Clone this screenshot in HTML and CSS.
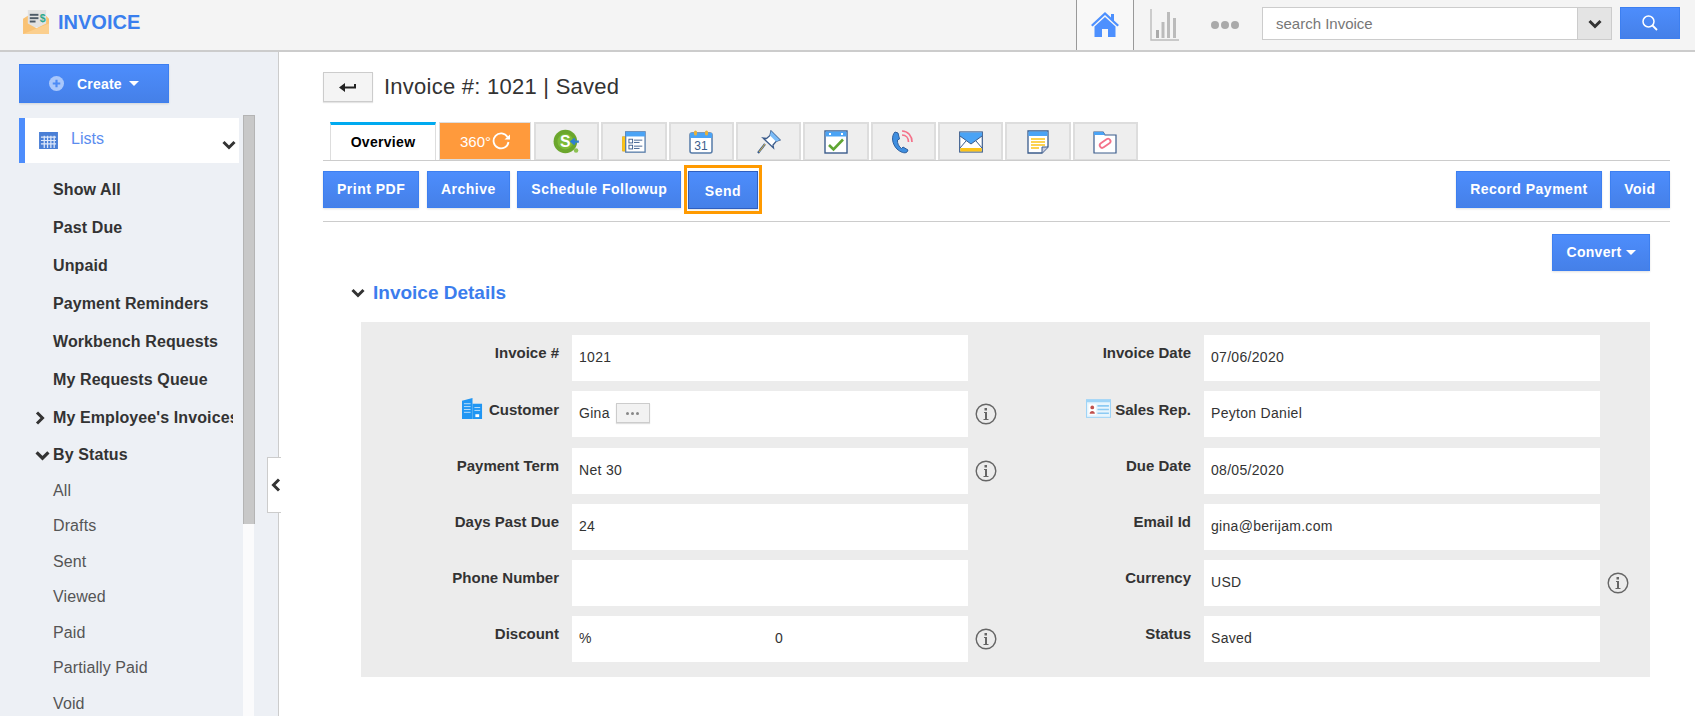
FILE: index.html
```html
<!DOCTYPE html>
<html lang="en">
<head>
<meta charset="utf-8">
<title>Invoice</title>
<link rel="stylesheet" href="styles.css">
</head>
<body>
<header class="topbar">
  <div class="brand">
    <svg class="brand-icon" viewBox="0 0 28 26"><rect x="5" y="0" width="19" height="18" fill="#e2e2e2"/><rect x="7" y="4" width="9" height="2" fill="#4d5a66"/><rect x="7" y="7.5" width="9" height="2" fill="#4d5a66"/><rect x="7" y="11" width="6" height="2" fill="#4d5a66"/><text x="17.5" y="12" class="brand-dollar">$</text><path d="M0 9 L5 6 V14 L14 19 L24 14 V6 L27 9 V25 H0Z" fill="#f9c274"/><path d="M0 25 L27 14 V25Z" fill="#fbcf8e"/></svg>
    <span class="brand-name">INVOICE</span>
  </div>
  <div class="home-tab">
    <svg class="home-icon" viewBox="0 0 28 26"><path d="M14 1 L0 14 L1.6 15.6 L14 4 L26.4 15.6 L28 14 L23 9.4 V3 H20 V6.6Z" fill="#4d90fe"/><path d="M14 6 L3.5 15.6 V26 H11 V18 H17 V26 H24.5 V15.6Z" fill="#4d90fe"/></svg>
  </div>
  <svg class="chart-icon" viewBox="0 0 29 32"><path d="M1 0 V31 H29" fill="none" stroke="#bbb" stroke-width="1.4"/><rect x="6" y="21" width="3" height="8" fill="#aaa"/><rect x="11.500" y="13" width="3" height="16" fill="#bbb"/><rect x="17" y="3" width="3" height="26" fill="#bbb"/><rect x="23" y="9" width="3" height="20" fill="#bbb"/></svg>
  <div class="dots"><i></i><i></i><i></i></div>
  <div class="search">
    <div class="search-text">search Invoice</div>
    <div class="search-drop"><svg class="chev-sm" viewBox="0 0 14 10"><path d="M1.500 2 L7 7.500 L12.500 2" fill="none" stroke="#333" stroke-width="3"/></svg></div>
  </div>
  <div class="search-btn"><svg viewBox="0 0 18 18" class="search-icon"><circle cx="7.500" cy="7.500" r="5.500" fill="none" stroke="#fff" stroke-width="1.500"/><path d="M11.500 11.500 L16 16" stroke="#fff" stroke-width="1.800"/></svg></div>
</header>

<div class="shell">
  <aside class="sidebar">
    <div class="side-col">
      <div class="btn create-btn">
        <svg class="plus" viewBox="0 0 14 14"><circle cx="7" cy="7" r="7" fill="#a9c7fb"/><path d="M7 3.500 V10.500 M3.500 7 H10.500" stroke="#4d8bf5" stroke-width="2"/></svg>
        <span>Create</span><i class="caret"></i>
      </div>
      <div class="lists-row">
        <svg class="cal-icon" viewBox="0 0 20 18"><rect width="20" height="18" fill="#4a7fd6"/><path d="M2 5.500 H18 M2 9 H18 M2 12.500 H18 M5.500 4 V17 M9 4 V17 M12.500 4 V17 M16 4 V17" stroke="#dfe9fa" stroke-width="1.300"/></svg>
        <span class="lists-label">Lists</span>
        <svg class="chev-lists" viewBox="0 0 14 10"><path d="M1.500 2 L7 7.500 L12.500 2" fill="none" stroke="#333" stroke-width="3"/></svg>
      </div>
      <ul class="menu">
        <li class="item strong"><span class="gutter"></span>Show All</li>
        <li class="item strong"><span class="gutter"></span>Past Due</li>
        <li class="item strong"><span class="gutter"></span>Unpaid</li>
        <li class="item strong"><span class="gutter"></span>Payment Reminders</li>
        <li class="item strong"><span class="gutter"></span>Workbench Requests</li>
        <li class="item strong"><span class="gutter"></span>My Requests Queue</li>
        <li class="item strong"><span class="gutter"><svg class="chev-right" viewBox="0 0 10 14"><path d="M2 1.500 L7.500 7 L2 12.500" fill="none" stroke="#333" stroke-width="3"/></svg></span>My Employee's Invoices</li>
        <li class="item strong status"><span class="gutter"><svg class="chev-down" viewBox="0 0 14 10"><path d="M1.500 2 L7 7.500 L12.500 2" fill="none" stroke="#333" stroke-width="3"/></svg></span>By Status</li>
        <li class="item"><span class="gutter"></span>All</li>
        <li class="item"><span class="gutter"></span>Drafts</li>
        <li class="item"><span class="gutter"></span>Sent</li>
        <li class="item"><span class="gutter"></span>Viewed</li>
        <li class="item"><span class="gutter"></span>Paid</li>
        <li class="item"><span class="gutter"></span>Partially Paid</li>
        <li class="item"><span class="gutter"></span>Void</li>
      </ul>
    </div>
    <div class="track"><div class="thumb"></div></div>
    <div class="collapse"><svg viewBox="0 0 10 14" class="chev-left"><path d="M8 1.500 L2.500 7 L8 12.500" fill="none" stroke="#333" stroke-width="3"/></svg></div>
  </aside>

  <main class="content">
    <div class="title-row">
      <div class="back"><svg viewBox="0 0 18 12" class="back-icon"><path d="M0 6.500 L6 2 V5.500 H15 V3 H17 V7.500 H6 V11Z" fill="#222"/></svg></div>
      <h1 class="title">Invoice #: 1021 | Saved</h1>
    </div>

    <nav class="tabs">
      <div class="tab tab-active">Overview</div>
      <div class="tab tab-360"><span>360°</span><svg viewBox="0 0 18 18" class="icon-g"><path d="M15.500 5 A7.500 7.500 0 1 0 16.500 10" fill="none" stroke="#fff" stroke-width="1.800"/><path d="M12.500 7.500 H18 V2.500Z" fill="#fff"/></svg></div>
      <div class="tab tab-icon"><svg class="ti ti-money" viewBox="0 0 24 24"><circle cx="11" cy="12" r="10.500" fill="#6ba62c"/><circle cx="11" cy="12" r="7" fill="#7dbb38"/><text x="11" y="17" class="money">S</text><path d="M23 12 H17 M19.500 9.500 L16.500 12 L19.500 14.500" fill="none" stroke="#2f80d0" stroke-width="2"/><circle cx="20.500" cy="20" r="2" fill="#8cc152"/></svg></div>
      <div class="tab tab-icon"><svg class="ti" viewBox="0 0 26 24"><rect x="0" y="6" width="6" height="16" rx="1" fill="#fcc419" stroke="#c9a64a" stroke-width=".6"/><rect x="4" y="1" width="21" height="22" fill="#fff" stroke="#567ba8" stroke-width="1.400"/><rect x="4" y="1" width="21" height="5" fill="#4aa3f5"/><rect x="7.500" y="9" width="4" height="4" fill="none" stroke="#3b5c8c"/><rect x="7.500" y="15.500" width="4" height="4" fill="none" stroke="#3b5c8c"/><path d="M13 10 H22 M13 12.500 H19 M13 16.500 H22 M13 19 H19" stroke="#3b5c8c"/></svg></div>
      <div class="tab tab-icon"><svg class="ti" viewBox="0 0 24 24"><rect x="1" y="3" width="22" height="20" rx="2" fill="#fff" stroke="#567ba8" stroke-width="1.500"/><path d="M1 3 H23 V8 H1Z" fill="#4aa3f5"/><rect x="5" y="0.500" width="3" height="5" rx="1.500" fill="#e6b13b"/><rect x="16" y="0.500" width="3" height="5" rx="1.500" fill="#e6b13b"/><text x="12" y="20" class="cal-num">31</text></svg></div>
      <div class="tab tab-icon"><svg class="ti" viewBox="0 0 24 24"><path d="M1 23 L8 14" stroke="#3b5c8c" stroke-width="2.200"/><path d="M2 22 L8 14" stroke="#d9b64a" stroke-width="1"/><path d="M14 1 L23 10 L19 11.500 L16 15 L16.500 18 L6 8 L9.500 8.500 L13 5.500Z" fill="#fff" stroke="#3b5c8c" stroke-width="1.300"/><path d="M14 1 L23 10 L19 11.500 L13 5.500Z" fill="#7cbcf7"/></svg></div>
      <div class="tab tab-icon"><svg class="ti" viewBox="0 0 24 24"><rect x="1" y="1" width="22" height="22" fill="#fff" stroke="#3b5c8c" stroke-width="1.400"/><rect x="1.500" y="1.500" width="21" height="5" fill="#4aa3f5"/><rect x="5" y="3" width="2" height="2" fill="#fff"/><rect x="17" y="3" width="2" height="2" fill="#fff"/><path d="M5 15 L9.500 19.500 L19 9.500" fill="none" stroke="#5fa533" stroke-width="2.600"/></svg></div>
      <div class="tab tab-icon"><svg class="ti" viewBox="0 0 24 24"><path d="M4 2 C0 6 1 14 6 19 C9 22 14 24 16 22 L17 20 L12 17 L10.500 18.500 C8 17 6 13 6.500 10 L8.500 9 L7 3 Z" fill="#3f8fe0" stroke="#2d5f9e" stroke-width="1"/><path d="M11 1 C17 1 21 6 21 12 M11 5 C15 5 17.500 8 17.500 12" fill="none" stroke="#f4728a" stroke-width="1.700"/></svg></div>
      <div class="tab tab-icon"><svg class="ti" viewBox="0 0 24 24"><rect x="0.700" y="2" width="22.600" height="20" fill="#fff" stroke="#3b5c8c" stroke-width="1.200"/><path d="M1 2.500 H23 V6 L12 14 L1 6Z" fill="#4aa3f5"/><path d="M1 6 L12 14 L23 6 M1 18 L7 11 M23 18 L17 11" fill="none" stroke="#3b5c8c"/><rect x="1.300" y="18" width="21.400" height="3.500" fill="#fcc419"/></svg></div>
      <div class="tab tab-icon"><svg class="ti" viewBox="0 0 24 24"><path d="M2 1 H22 V17 L16 23 H2Z" fill="#fff" stroke="#3b5c8c" stroke-width="1.300"/><rect x="2.500" y="1.500" width="19" height="4.500" fill="#4aa3f5"/><path d="M5 9 H19 M5 12 H19 M5 15 H19 M5 18 H13" stroke="#fcc419" stroke-width="1.400"/><path d="M16 23 V17 H22" fill="#ccd" stroke="#3b5c8c"/></svg></div>
      <div class="tab tab-icon"><svg class="ti" viewBox="0 0 24 24"><path d="M1 2 H10 L12 5 H23 V23 H1Z" fill="#fff" stroke="#3b5c8c" stroke-width="1.200"/><path d="M1 2 H10 L12 5 H1Z" fill="#4aa3f5"/><rect x="6.500" y="11" width="12" height="5" rx="2.500" transform="rotate(-35 12 14)" fill="none" stroke="#f4728a" stroke-width="1.800"/></svg></div>
    </nav>

    <div class="actions">
      <div class="btn act">Print PDF</div>
      <div class="btn act">Archive</div>
      <div class="btn act">Schedule Followup</div>
      <div class="btn act send">Send</div>
      <div class="btn act wide push">Record Payment</div>
      <div class="btn act wide">Void</div>
    </div>

    <div class="convert-row">
      <div class="btn act convert">Convert<i class="caret caret-sm"></i></div>
    </div>

    <h2 class="section"><svg class="chev-section" viewBox="0 0 14 10"><path d="M1.500 2 L7 7.500 L12.500 2" fill="none" stroke="#333" stroke-width="3"/></svg>Invoice Details</h2>

    <section class="panel">
      <div class="pair"><div class="lbl">Invoice #</div><div class="val">1021</div></div>
      <div class="pair"><div class="lbl lbl-r">Invoice Date</div><div class="val">07/06/2020</div></div>

      <div class="pair"><div class="lbl lbl-low"><svg class="lbl-icon" viewBox="0 0 24 22"><path d="M1 22 V3 L12 0 V22Z" fill="#2196f3"/><path d="M12 6 H22 V22 H12Z" fill="#2196f3"/><path d="M3 6 H10 M3 9 H10 M3 12 H10 M3 15 H10 M14 10 H20 M14 13 H20" stroke="#bfe1fb"/><rect x="15" y="17" width="4" height="3" fill="#fff"/></svg>Customer</div><div class="val">Gina<span class="more"><i></i><i></i><i></i></span></div><svg class="info" viewBox="0 0 22 22"><circle cx="11" cy="11" r="9.800" fill="none" stroke="#666" stroke-width="1.400"/><path d="M9.500 5 H12 V7.500 H9.500Z M9 9 H12 V16 H13.500 V17 H8.500 V16 H10 V10 H9Z" fill="#666"/></svg></div>
      <div class="pair"><div class="lbl lbl-r lbl-low"><svg class="lbl-icon" viewBox="0 0 24 18"><rect width="24" height="18" fill="#9fd4f7"/><rect x="1" y="3" width="22" height="14" fill="#e8f5fd"/><rect x="2.500" y="5" width="7" height="10" fill="#fff"/><circle cx="6" cy="8" r="1.800" fill="#c0504d"/><path d="M3.500 14 C3.500 10.500 8.500 10.500 8.500 14Z" fill="#c0504d"/><path d="M11 6.500 H22 M11 10 H22 M11 13.500 H22" stroke="#8ccaf3" stroke-width="1.500"/></svg>Sales Rep.</div><div class="val">Peyton Daniel</div></div>

      <div class="pair"><div class="lbl">Payment Term</div><div class="val">Net 30</div><svg class="info" viewBox="0 0 22 22"><circle cx="11" cy="11" r="9.800" fill="none" stroke="#666" stroke-width="1.400"/><path d="M9.500 5 H12 V7.500 H9.500Z M9 9 H12 V16 H13.500 V17 H8.500 V16 H10 V10 H9Z" fill="#666"/></svg></div>
      <div class="pair"><div class="lbl lbl-r">Due Date</div><div class="val">08/05/2020</div></div>

      <div class="pair"><div class="lbl">Days Past Due</div><div class="val">24</div></div>
      <div class="pair"><div class="lbl lbl-r">Email Id</div><div class="val">gina@berijam.com</div></div>

      <div class="pair"><div class="lbl">Phone Number</div><div class="val"></div></div>
      <div class="pair"><div class="lbl lbl-r">Currency</div><div class="val">USD</div><svg class="info" viewBox="0 0 22 22"><circle cx="11" cy="11" r="9.800" fill="none" stroke="#666" stroke-width="1.400"/><path d="M9.500 5 H12 V7.500 H9.500Z M9 9 H12 V16 H13.500 V17 H8.500 V16 H10 V10 H9Z" fill="#666"/></svg></div>

      <div class="pair"><div class="lbl">Discount</div><div class="val"><span class="pct">%</span>0</div><svg class="info" viewBox="0 0 22 22"><circle cx="11" cy="11" r="9.800" fill="none" stroke="#666" stroke-width="1.400"/><path d="M9.500 5 H12 V7.500 H9.500Z M9 9 H12 V16 H13.500 V17 H8.500 V16 H10 V10 H9Z" fill="#666"/></svg></div>
      <div class="pair"><div class="lbl lbl-r">Status</div><div class="val">Saved</div></div>
    </section>
  </main>
</div>
</body>
</html>
```

FILE: styles.css
```css
* { box-sizing: border-box; }
html, body { height: 100%; }
body {
  margin: 0;
  overflow: hidden;
  background: #fff;
  color: #333;
  font-family: "Liberation Sans", Arial, sans-serif;
  font-size: 14px;
  display: flex;
  flex-direction: column;
}
i { display: block; }

/* top bar */
.topbar {
  height: 52px;
  flex: none;
  display: flex;
  align-items: flex-start;
  background: #f4f4f4;
  border-bottom: 2px solid #ccc;
}
.brand {
  display: flex;
  align-items: center;
  margin-left: 23px;
  margin-right: auto;
  height: 44px;
}
.brand-icon { width: 27px; height: 25px; margin-right: 8px; }
.brand-dollar { font-size: 11px; font-weight: 700; fill: #2fa98c; font-family: "Liberation Sans", sans-serif; }
.brand-name { font-size: 20px; font-weight: 700; color: #3a7fee; }
.home-tab {
  width: 58px;
  height: 50px;
  border-left: 1px solid #999;
  border-right: 1px solid #999;
  background: #f8f8f8;
  display: flex;
  align-items: center;
  justify-content: center;
  padding-bottom: 3px;
}
.home-icon { width: 28px; height: 26px; }
.chart-icon { width: 29px; height: 32px; margin: 9px 0 0 16px; }
.dots { display: flex; gap: 2px; margin: 21px 23px 0 32px; }
.dots i { width: 8px; height: 8px; border-radius: 50%; background: #aaa; }
.search {
  width: 350px;
  height: 33px;
  margin-top: 7px;
  display: flex;
  background: #fff;
  border: 1px solid #ccc;
}
.search-text { flex: 1; padding: 7px 13px; font-size: 15px; line-height: 18px; color: #777; }
.search-drop {
  width: 34px;
  background: #e4e4e4;
  border-left: 1px solid #ccc;
  display: flex;
  align-items: center;
  justify-content: center;
}
.chev-sm { width: 14px; height: 10px; }
.search-btn {
  width: 60px;
  height: 32px;
  margin: 7px 15px 0 8px;
  background: linear-gradient(#4d8dfc, #4580e8);
  border: 1px solid #3d7ff0;
  display: flex;
  align-items: center;
  justify-content: center;
}
.search-icon { width: 18px; height: 18px; }

/* shell */
.shell { flex: 1; display: flex; min-height: 0; }

/* sidebar */
.sidebar {
  position: relative;
  flex: none;
  width: 279px;
  display: flex;
  background: #edf0f5;
  border-right: 1px solid #ccc;
}
.side-col { width: 220px; margin: 12px 0 0 19px; flex: none; overflow: hidden; }
.track {
  width: 11px;
  margin: 63px 0 0 4px;
  background: #fbfbfc;
}
.thumb {
  width: 12px;
  height: 409px;
  background: #c8c8c8;
  border: 1px solid #b4b4b4;
  border-width: 1px 1px 0 1px;
}
.collapse {
  position: absolute;
  left: 267px;
  top: 405px;
  width: 14px;
  height: 56px;
  background: #fff;
  border: 1px solid #ccc;
  border-right: 0;
  display: flex;
  align-items: center;
  padding-left: 3px;
}
.chev-left { width: 10px; height: 14px; }

.btn {
  background: linear-gradient(#4d8dfc, #4580e8);
  border: 1px solid #3d7ff0;
  box-shadow: 0 1px 2px rgba(0, 0, 0, .12);
  color: #fff;
  font-weight: 700;
}
.create-btn {
  width: 150px;
  height: 39px;
  display: flex;
  align-items: center;
  padding-left: 29px;
  letter-spacing: .2px;
}
.plus { width: 15px; height: 15px; margin-right: 13px; }
.caret {
  width: 0;
  height: 0;
  margin-left: 7px;
  border: 5px solid transparent;
  border-top-color: #fff;
  border-bottom: 0;
}
.caret-sm { margin-left: 4px; border-width: 5px; border-bottom: 0; }
.lists-row {
  height: 45px;
  margin-top: 15px;
  display: flex;
  align-items: center;
  background: #fff;
  border-left: 6px solid #4d8dfc;
  padding-left: 14px;
}
.cal-icon { width: 19px; height: 17px; margin-right: 13px; }
.lists-label { font-size: 16px; color: #5b8def; margin-top: -3px; }
.chev-lists { width: 14px; height: 10px; margin: 8px 3px 0 auto; }

.menu { list-style: none; margin: 8px 0 0; padding: 0; width: 214px; overflow: hidden; }
.item {
  height: 35.500px;
  display: flex;
  align-items: center;
  font-size: 16px;
  letter-spacing: .1px;
  color: #555;
  white-space: nowrap;
}
.item.strong { height: 38px; font-weight: 700; color: #333; letter-spacing: .1px; }
.item.status { height: 36px; }
.gutter { width: 34px; flex: none; display: flex; }
.chev-right { width: 10px; height: 14px; margin-left: 16px; }
.chev-down { width: 15px; height: 11px; margin-left: 16px; }

/* main */
.content { flex: 1; min-width: 0; padding: 20px 25px 0 44px; }
.title-row { display: flex; align-items: center; }
.back {
  width: 50px;
  height: 30px;
  background: #f4f4f4;
  border: 1px solid #ccc;
  box-shadow: 0 1px 1px rgba(0, 0, 0, .1);
  display: flex;
  align-items: center;
  justify-content: center;
}
.back-icon { width: 18px; height: 12px; }
.title { margin: 0 0 0 11px; font-size: 22px; font-weight: 400; color: #333; line-height: 30px; letter-spacing: .25px; }

.tabs {
  margin-top: 20px;
  padding-left: 7px;
  display: flex;
  gap: 2px;
  height: 39px;
  border-bottom: 1px solid #ccc;
}
.tab {
  width: 65.350px;
  height: 38px;
  display: flex;
  align-items: center;
  justify-content: center;
  background: #eee;
  border: 2px solid #ddd;
  border-bottom-width: 1px;
}
.tab-active {
  width: 106px;
  background: #fff;
  border: 1px solid #ddd;
  border-top: 3px solid #00aaf0;
  border-bottom: 0;
  padding-bottom: 2px;
  font-weight: 700;
  color: #000;
  letter-spacing: .3px;
  margin-right: 1px;
}
.tab-360 {
  width: 92px;
  background: #ff9a3c;
  border: 1px solid #ddd;
  color: #fff;
  font-size: 15px;
  gap: 1px;
  margin-right: 1px;
}
.icon-g { width: 18px; height: 18px; }
.ti { width: 24px; height: 24px; }
.ti-money { width: 27px; height: 27px; }
.money { font: 700 14px "Liberation Sans", sans-serif; fill: #fff; text-anchor: middle; }
.cal-num { font: 400 12px "Liberation Sans", sans-serif; fill: #3b5c8c; text-anchor: middle; }

.actions { display: flex; gap: 7.600px; margin-top: 10px; }
.act {
  height: 37px;
  padding: 0 13px 2px;
  display: flex;
  align-items: center;
  letter-spacing: .5px;
}
.act.wide { padding: 0 13.500px 2px; }
.send {
  position: relative;
  width: 70px;
  height: 38px;
  margin-left: -1px;
  padding: 2px 0 0;
  justify-content: center;
  border-color: #2f5fc0;
}
.send::after {
  content: "";
  position: absolute;
  inset: -7px -5px -6px -5px;
  border: 3px solid #ff9a00;
}
.push { margin-left: auto; }

.convert-row {
  display: flex;
  justify-content: flex-end;
  margin-top: 12px;
  padding: 12px 20px 0 0;
  border-top: 1px solid #ccc;
}
.convert { width: 98px; padding: 0 0 1px; justify-content: center; letter-spacing: .3px; }

.section {
  display: flex;
  align-items: center;
  margin: 10px 0 0 28px;
  height: 24px;
  font-size: 19px;
  font-weight: 700;
  color: #3b7ded;
  letter-spacing: 0;
}
.chev-section { width: 14px; height: 10px; margin-right: 8px; }

.panel {
  margin: 17px 20px 0 38px;
  height: 355px;
  padding-top: 13px;
  background: #ececec;
  display: grid;
  grid-template-columns: 650px 1fr;
  grid-auto-rows: 46px;
  row-gap: 10.250px;
}
.pair { display: flex; }
.lbl {
  width: 198px;
  margin-right: 13px;
  flex: none;
  padding-top: 10px;
  line-height: 16px;
  text-align: right;
  font-size: 15px;
  font-weight: 700;
  color: #333;
}
.lbl-r { width: 180px; }
.lbl-low { padding-top: 11px; display: flex; justify-content: flex-end; align-items: flex-start; }
.lbl-icon { width: 25px; height: 21px; margin: -4px 4px 0 0; }
.val {
  width: 396px;
  flex: none;
  background: #fff;
  padding: 0 7px 2px;
  display: flex;
  align-items: center;
  color: #333;
  letter-spacing: .3px;
}
.pct { width: 196px; flex: none; }
.more {
  width: 34px;
  height: 20px;
  margin-left: 6px;
  background: #f2f2f2;
  border: 1px solid #ccc;
  box-shadow: 0 1px 1px rgba(0, 0, 0, .12);
  display: flex;
  align-items: center;
  justify-content: center;
  gap: 2px;
}
.more i { width: 3px; height: 3px; border-radius: 50%; background: #888; }
.info { width: 22px; height: 22px; align-self: center; margin-left: 7px; }
```
